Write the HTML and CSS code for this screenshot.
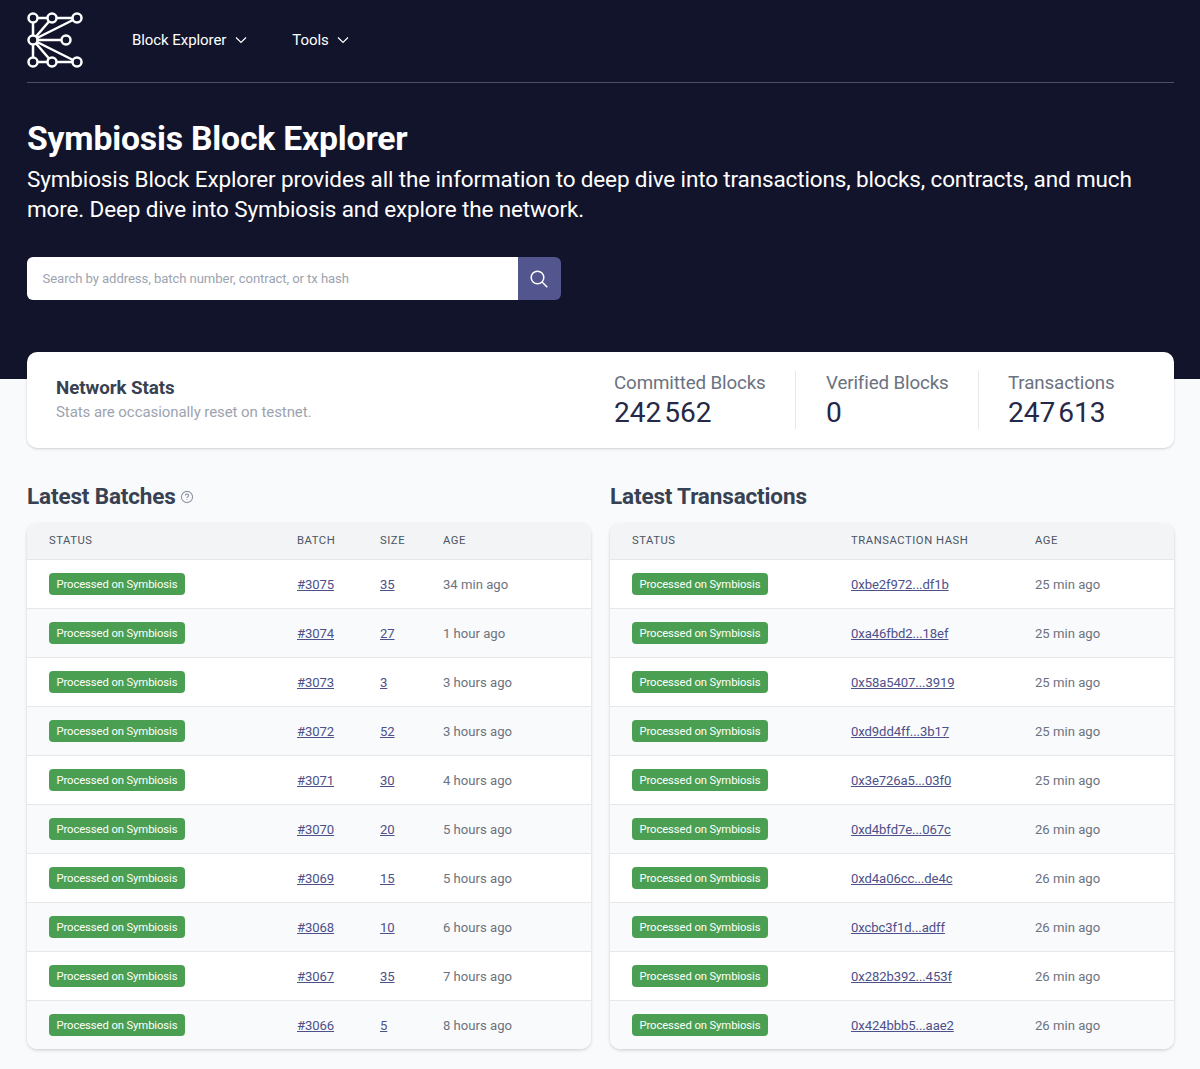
FILE: index.html
```html
<!DOCTYPE html>
<html lang="en">
<head>
<meta charset="utf-8">
<title>Symbiosis Block Explorer</title>
<link rel="stylesheet" href="styles.css">
</head>
<body>
<header class="hero">
  <nav class="nav">
    <svg class="logo" width="56" height="56" viewBox="0 0 56 56" fill="none" stroke="#fff" stroke-width="2.5">
      <path d="M6 6H50M6 28H39M6 50H50M6 6V50M6 28L50 6M6 28L50 50M6 28L25 6M6 28L25 50"/>
      <g fill="#11142b" stroke-width="2.5">
        <circle cx="6" cy="6" r="4.500"/><circle cx="25" cy="6" r="4.500"/><circle cx="50" cy="6" r="4.500"/>
        <circle cx="6" cy="28" r="4.500"/><circle cx="39" cy="28" r="4.500"/>
        <circle cx="6" cy="50" r="4.500"/><circle cx="25" cy="50" r="4.500"/><circle cx="50" cy="50" r="4.500"/>
      </g>
    </svg>
    <a class="nav-item nav-first">Block Explorer
      <svg class="chev" width="12" height="8" viewBox="0 0 12 8" fill="none" stroke="#fff" stroke-width="1.2"><path d="M1 1.500L6 6.500L11 1.500"/></svg>
    </a>
    <a class="nav-item">Tools
      <svg class="chev" width="12" height="8" viewBox="0 0 12 8" fill="none" stroke="#fff" stroke-width="1.2"><path d="M1 1.500L6 6.500L11 1.500"/></svg>
    </a>
  </nav>
  <h1 class="title">Symbiosis Block Explorer</h1>
  <p class="subtitle">Symbiosis Block Explorer provides all the information to deep dive into transactions, blocks, contracts, and much more. Deep dive into Symbiosis and explore the network.</p>
  <form class="search">
    <input class="search-input" type="text" placeholder="Search by address, batch number, contract, or tx hash">
    <button class="search-btn" type="button" aria-label="Search">
      <svg width="20" height="20" viewBox="0 0 20 20" fill="none" stroke="#fff" stroke-width="1.5"><circle cx="8.500" cy="8.500" r="6.300"/><path d="M13 13L18.300 18.300"/></svg>
    </button>
  </form>
</header>
<main class="content">
  <section class="stats">
    <div class="stats-intro">
      <h2 class="stats-title">Network Stats</h2>
      <p class="stats-note">Stats are occasionally reset on testnet.</p>
    </div>
    <div class="stat stat-committed"><div class="stat-label">Committed Blocks</div><div class="stat-value">242&#8202;562</div></div>
    <div class="stat stat-verified"><div class="stat-label">Verified Blocks</div><div class="stat-value">0</div></div>
    <div class="stat stat-tx"><div class="stat-label">Transactions</div><div class="stat-value">247&#8202;613</div></div>
  </section>
  <div class="columns">
    <section>
      <h2 class="section-title">Latest Batches
        <svg class="help" width="14" height="14" viewBox="0 0 14 14" fill="none" stroke="#8f96a3" stroke-width="1.100"><circle cx="7" cy="7" r="5.600"/><path d="M5.300 5.600C5.300 4.600 6 4.100 7 4.100C8 4.100 8.700 4.700 8.700 5.500C8.700 6.500 7 6.700 7 7.900M7 9.200V9.900"/></svg>
      </h2>
      <table class="table">
        <colgroup><col class="c-b1"><col class="c-b2"><col class="c-b3"><col></colgroup>
        <thead><tr><th>Status</th><th>Batch</th><th>Size</th><th>Age</th></tr></thead>
        <tbody>
          <tr><td><span class="badge">Processed on Symbiosis</span></td><td><a class="link">#3075</a></td><td><a class="link">35</a></td><td>34 min ago</td></tr>
          <tr><td><span class="badge">Processed on Symbiosis</span></td><td><a class="link">#3074</a></td><td><a class="link">27</a></td><td>1 hour ago</td></tr>
          <tr><td><span class="badge">Processed on Symbiosis</span></td><td><a class="link">#3073</a></td><td><a class="link">3</a></td><td>3 hours ago</td></tr>
          <tr><td><span class="badge">Processed on Symbiosis</span></td><td><a class="link">#3072</a></td><td><a class="link">52</a></td><td>3 hours ago</td></tr>
          <tr><td><span class="badge">Processed on Symbiosis</span></td><td><a class="link">#3071</a></td><td><a class="link">30</a></td><td>4 hours ago</td></tr>
          <tr><td><span class="badge">Processed on Symbiosis</span></td><td><a class="link">#3070</a></td><td><a class="link">20</a></td><td>5 hours ago</td></tr>
          <tr><td><span class="badge">Processed on Symbiosis</span></td><td><a class="link">#3069</a></td><td><a class="link">15</a></td><td>5 hours ago</td></tr>
          <tr><td><span class="badge">Processed on Symbiosis</span></td><td><a class="link">#3068</a></td><td><a class="link">10</a></td><td>6 hours ago</td></tr>
          <tr><td><span class="badge">Processed on Symbiosis</span></td><td><a class="link">#3067</a></td><td><a class="link">35</a></td><td>7 hours ago</td></tr>
          <tr><td><span class="badge">Processed on Symbiosis</span></td><td><a class="link">#3066</a></td><td><a class="link">5</a></td><td>8 hours ago</td></tr>
        </tbody>
      </table>
    </section>
    <section>
      <h2 class="section-title">Latest Transactions</h2>
      <table class="table">
        <colgroup><col class="c-t1"><col class="c-t2"><col></colgroup>
        <thead><tr><th>Status</th><th>Transaction Hash</th><th>Age</th></tr></thead>
        <tbody>
          <tr><td><span class="badge">Processed on Symbiosis</span></td><td><a class="link">0xbe2f972...df1b</a></td><td>25 min ago</td></tr>
          <tr><td><span class="badge">Processed on Symbiosis</span></td><td><a class="link">0xa46fbd2...18ef</a></td><td>25 min ago</td></tr>
          <tr><td><span class="badge">Processed on Symbiosis</span></td><td><a class="link">0x58a5407...3919</a></td><td>25 min ago</td></tr>
          <tr><td><span class="badge">Processed on Symbiosis</span></td><td><a class="link">0xd9dd4ff...3b17</a></td><td>25 min ago</td></tr>
          <tr><td><span class="badge">Processed on Symbiosis</span></td><td><a class="link">0x3e726a5...03f0</a></td><td>25 min ago</td></tr>
          <tr><td><span class="badge">Processed on Symbiosis</span></td><td><a class="link">0xd4bfd7e...067c</a></td><td>26 min ago</td></tr>
          <tr><td><span class="badge">Processed on Symbiosis</span></td><td><a class="link">0xd4a06cc...de4c</a></td><td>26 min ago</td></tr>
          <tr><td><span class="badge">Processed on Symbiosis</span></td><td><a class="link">0xcbc3f1d...adff</a></td><td>26 min ago</td></tr>
          <tr><td><span class="badge">Processed on Symbiosis</span></td><td><a class="link">0x282b392...453f</a></td><td>26 min ago</td></tr>
          <tr><td><span class="badge">Processed on Symbiosis</span></td><td><a class="link">0x424bbb5...aae2</a></td><td>26 min ago</td></tr>
        </tbody>
      </table>
    </section>
  </div>
</main>
</body>
</html>
```
FILE: styles.css
```css
* { box-sizing: border-box; }
html, body { margin: 0; padding: 0; }
body { background: #f9fafb; font-family: Roboto, "Liberation Sans", sans-serif; color: #374151; }

.hero { background: #11142b; height: 379px; padding: 12px 26px 0 27px; color: #fff; }
.nav { display: flex; align-items: center; height: 71px; padding-bottom: 15px; border-bottom: 1px solid #4b5065; }
.logo { display: block; flex: none; }
.nav-item { display: flex; align-items: center; font-size: 15px; line-height: 24px; color: #fff; margin-left: 45.5px; letter-spacing: -0.07px; }
.nav-first { margin-left: 49px; }
.chev { margin-left: 8.5px; }
.title { margin: 36px 0 0; font-size: 33.75px; line-height: 40px; font-weight: 700; letter-spacing: -0.2px; }
.subtitle { margin: 6px 0 0; font-size: 22.5px; line-height: 29.5px; font-weight: 400; letter-spacing: -0.14px; }
.search { display: flex; width: 533.5px; height: 43px; margin-top: 33px; border-radius: 6px; overflow: hidden; }
.search-input { flex: 1; min-width: 0; border: 0; outline: 0; background: #fff; padding: 0 15.5px; font: 13.125px Roboto, sans-serif; letter-spacing: -0.075px; }
.search-input::placeholder { color: #9ca3af; opacity: 1; }
.search-btn { width: 42.5px; border: 0; padding: 0 1px 0 0; background: #53558f; display: flex; align-items: center; justify-content: center; }

.content { padding: 0 26px 19px 27px; }
.stats { display: flex; align-items: center; height: 96px; margin-top: -27px; background: #fff; border-radius: 10px; box-shadow: 0 1px 3px rgba(0,0,0,.12), 0 1px 2px rgba(0,0,0,.06); position: relative; padding-left: 29px; }
.stats-intro { flex: 1; padding-bottom: 1px; }
.stats-title { margin: 0; font-size: 18.75px; line-height: 25px; font-weight: 700; color: #374151; letter-spacing: -0.08px; }
.stats-note { margin: 0; font-size: 15px; line-height: 22px; color: #9ca3af; letter-spacing: -0.075px; }
.stat { flex: none; height: 58px; padding-left: 30px; border-left: 1px solid #e5e7eb; }
.stat-committed { border-left: 0; width: 211px; }
.stat-verified { width: 183px; }
.stat-tx { width: 196px; padding-left: 29px; }
.stat-label { font-size: 18.75px; line-height: 25px; color: #6b7280; letter-spacing: -0.13px; }
.stat-value { font-size: 28.125px; line-height: 34px; color: #252947; }

.columns { display: grid; grid-template-columns: 564px 564px; column-gap: 19px; margin-top: 33px; }
.section-title { display: flex; align-items: center; margin: 0 0 12px; font-size: 22.5px; line-height: 30px; font-weight: 700; color: #374151; letter-spacing: -0.15px; }
.help { margin: 2px 0 0 4px; }
.table { width: 100%; border-collapse: separate; border-spacing: 0; table-layout: fixed; background: #fff; border-radius: 10px; box-shadow: 0 1px 3px rgba(0,0,0,.12), 0 2px 4px rgba(0,0,0,.06); font-size: 13.125px; }
.c-b1 { width: 270px; } .c-b2 { width: 83px; } .c-b3 { width: 63px; }
.c-t1 { width: 241px; } .c-t2 { width: 184px; }
.table th { height: 37px; padding: 0 0 1px; text-align: left; background: #f3f4f6; color: #4b5563; font-size: 11.25px; font-weight: 400; letter-spacing: .55px; text-transform: uppercase; border-bottom: 1px solid #e5e7eb; }
.table th:first-child { border-top-left-radius: 10px; }
.table th:last-child { border-top-right-radius: 10px; }
.table td { height: 49px; padding: 0; color: #6b7280; border-top: 1px solid #e5e7eb; }
.table tbody tr:first-child td { border-top: 0; height: 48px; }
.table th:first-child, .table td:first-child { padding-left: 22px; }
.table tbody tr:nth-child(even) td { background: #f9fafb; }
.table tbody tr:last-child td:first-child { border-bottom-left-radius: 10px; }
.table tbody tr:last-child td:last-child { border-bottom-right-radius: 10px; }
.badge { display: inline-block; height: 22px; padding: 0 7.5px; border-radius: 4px; background: #4b9f52; color: #fff; font-size: 11.25px; line-height: 23px; letter-spacing: -0.09px; vertical-align: middle; }
.link { color: #4e5089; text-decoration: underline; letter-spacing: -0.1px; }
```
